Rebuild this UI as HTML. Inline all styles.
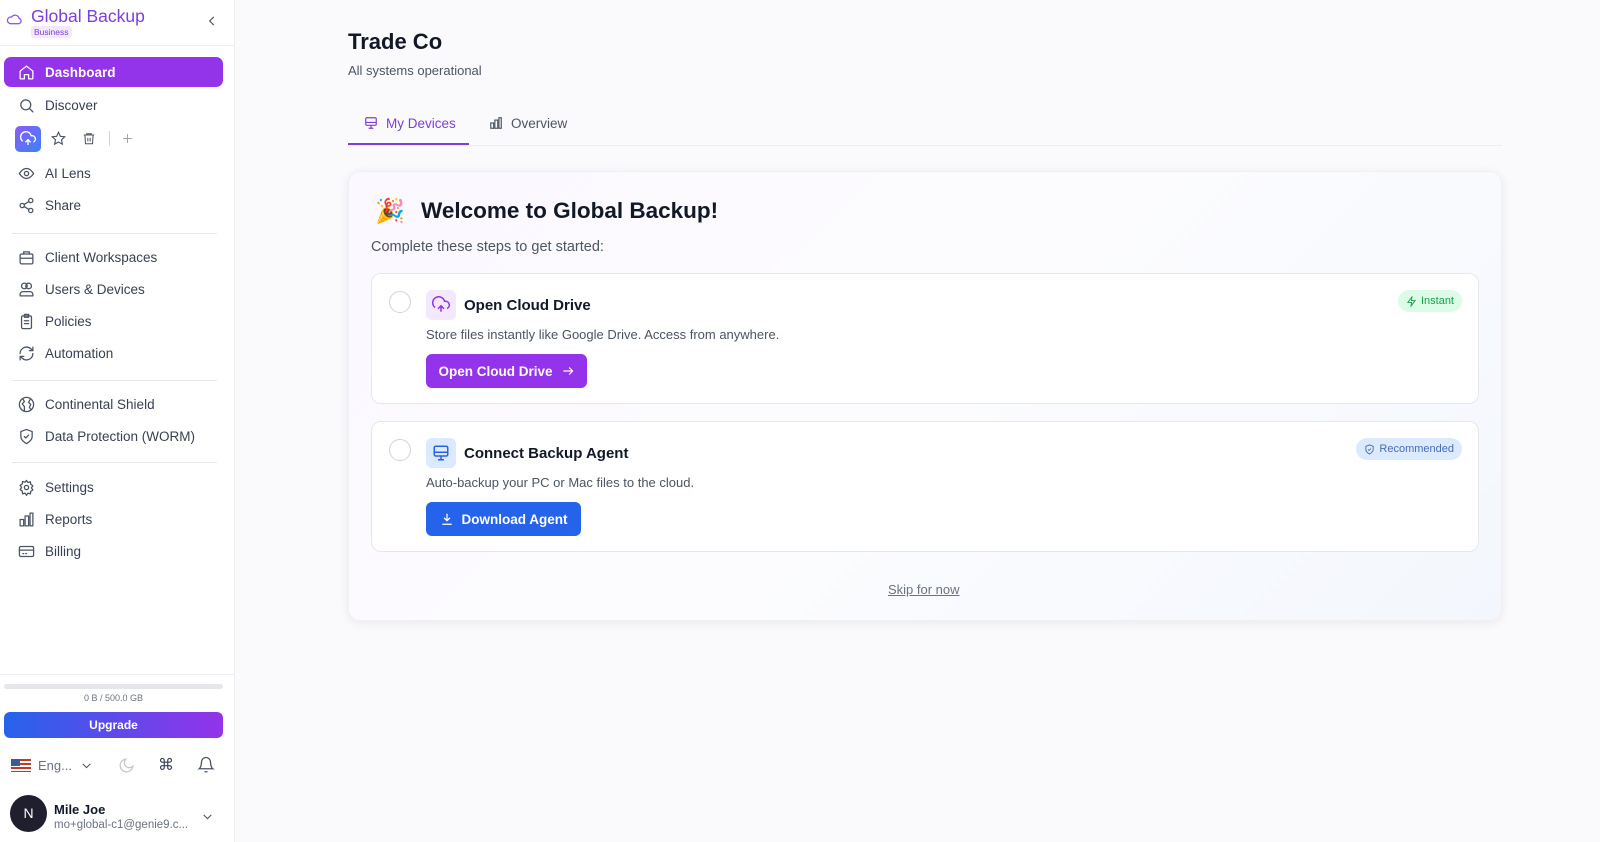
<!DOCTYPE html>
<html><head><meta charset="utf-8"><style>
*{box-sizing:border-box;margin:0;padding:0}
body{width:1600px;height:842px;overflow:hidden;font-family:"Liberation Sans",sans-serif;background:#fafafc;color:#1f2937;position:relative}
.sb{position:absolute;left:0;top:0;width:235px;height:842px;background:#fff;border-right:1px solid #eceef2}
.abs{position:absolute}
.nav{position:absolute;left:18px;display:flex;align-items:center;font-size:13.5px;color:#374151}
.nav svg{width:17px;height:17px;margin-right:10px;stroke:#4b5563;fill:none;stroke-width:1.8;stroke-linecap:round;stroke-linejoin:round}
.div{position:absolute;left:12px;width:205px;height:1px;background:#e5e7eb}
.card{position:absolute;left:348px;top:171px;width:1154px;height:450px;border-radius:12px;background:linear-gradient(135deg,#fbf8ff,#fcfcfe 50%,#f3f7fd);box-shadow:0 2px 10px rgba(0,0,0,.07);border:1px solid #f0f0f4}
.step{position:absolute;left:371px;width:1108px;height:131px;background:#fff;border:1.5px solid #e6e7eb;border-radius:10px}
.circ{position:absolute;left:17px;top:17px;width:22px;height:22px;border:1.5px solid #cfd3d9;border-radius:50%}
.ib{position:absolute;left:54px;top:16px;width:30px;height:30px;border-radius:6px;display:flex;align-items:center;justify-content:center}
.st{position:absolute;left:92px;top:23px;font-size:15px;font-weight:600;color:#111827}
.sd{position:absolute;left:54px;top:53px;font-size:13px;color:#4b5563}
.btn{position:absolute;left:54px;height:34px;border-radius:6px;color:#fff;font-size:13.5px;font-weight:bold;display:flex;align-items:center;justify-content:center;gap:8px}
.badge{position:absolute;top:16px;right:16px;height:22px;border-radius:11px;font-size:11px;display:flex;align-items:center;gap:4px;padding:0 8px}
.chev{position:absolute}
</style></head><body>
<div class="sb">
 <svg class="abs" style="left:5px;top:11px" width="18" height="16" viewBox="0 0 24 24" fill="none" stroke="#8b5cf6" stroke-width="2"><path d="M17.5 19H7a5 5 0 1 1 1.5-9.8A6 6 0 0 1 19.5 11a4 4 0 0 1-2 8z"/></svg>
 <div class="abs" style="left:31px;top:6px;font-size:17.5px;color:#7e3fd8;font-weight:500">Global Backup</div>
 <div class="abs" style="left:31px;top:26px;font-size:8.5px;color:#7e3fd8;background:#f3e8ff;padding:1px 3px;border-radius:3px">Business</div>
 <svg class="abs" style="left:205px;top:14px" width="14" height="14" viewBox="0 0 24 24" fill="none" stroke="#4b5563" stroke-width="2"><path d="M15 5l-7 7 7 7"/></svg>
 <div class="abs" style="left:0;top:45px;width:235px;height:1px;background:#eceef2"></div>
 <div class="abs" style="left:4px;top:57px;width:219px;height:30px;background:#9333ea;border-radius:7px"></div>
 <div class="nav" style="top:64px;color:#fff;font-weight:bold"><svg style="stroke:#fff" viewBox="0 0 24 24"><path d="M3 10l9-7 9 7v10a1 1 0 0 1-1 1h-5v-6h-6v6H4a1 1 0 0 1-1-1z"/></svg>Dashboard</div>
 <div class="nav" style="top:97px"><svg viewBox="0 0 24 24"><circle cx="11" cy="11" r="7"/><path d="M21 21l-5-5"/></svg>Discover</div>
 <div class="abs" style="left:15px;top:126px;width:26px;height:26px;border-radius:5px;background:linear-gradient(135deg,#8b5cf6,#3b82f6);display:flex;align-items:center;justify-content:center"><svg width="16" height="16" viewBox="0 0 24 24" fill="none" stroke="#fff" stroke-width="2"><path d="M12 13v8M8 17l4-4 4 4M20 16.6A5 5 0 0 0 18 7h-1.3A8 8 0 1 0 4 15.3"/></svg></div>
 <svg class="abs" style="left:51px;top:131px" width="15" height="15" viewBox="0 0 24 24" fill="none" stroke="#4b5563" stroke-width="1.8"><path d="M12 2l3 6.5 7 .8-5.2 4.8 1.4 7L12 17.6 5.8 21l1.4-7L2 9.3l7-.8z"/></svg>
 <svg class="abs" style="left:82px;top:131px" width="14" height="15" viewBox="0 0 24 24" fill="none" stroke="#4b5563" stroke-width="1.8"><path d="M3 6h18M8 6V4h8v2M5 6l1 15h12l1-15M10 11v6M14 11v6"/></svg>
 <div class="abs" style="left:109px;top:131px;width:1px;height:15px;background:#d1d5db"></div>
 <svg class="abs" style="left:121px;top:132px" width="13" height="13" viewBox="0 0 24 24" fill="none" stroke="#9ca3af" stroke-width="1.8"><path d="M12 4v16M4 12h16"/></svg>
 <div class="nav" style="top:165px"><svg viewBox="0 0 24 24"><path d="M2 12s4-7 10-7 10 7 10 7-4 7-10 7S2 12 2 12z"/><circle cx="12" cy="12" r="3"/></svg>AI Lens</div>
 <div class="nav" style="top:197px"><svg viewBox="0 0 24 24"><circle cx="18" cy="5" r="3"/><circle cx="6" cy="12" r="3"/><circle cx="18" cy="19" r="3"/><path d="M8.6 13.5l6.8 4M15.4 6.5l-6.8 4"/></svg>Share</div>
 <div class="div" style="top:233px"></div>
 <div class="nav" style="top:249px"><svg viewBox="0 0 24 24"><rect x="3" y="7" width="18" height="14" rx="2"/><path d="M8 7V4h8v3M3 13h18"/></svg>Client Workspaces</div>
 <div class="nav" style="top:281px"><svg viewBox="0 0 24 24"><circle cx="9" cy="7" r="4"/><circle cx="15" cy="7" r="4"/><path d="M3 21v-2a4 4 0 0 1 4-4h10a4 4 0 0 1 4 4v2z"/></svg>Users &amp; Devices</div>
 <div class="nav" style="top:313px"><svg viewBox="0 0 24 24"><rect x="5" y="4" width="14" height="18" rx="2"/><path d="M9 2h6v4H9zM9 11h6M9 15h6"/></svg>Policies</div>
 <div class="nav" style="top:345px"><svg viewBox="0 0 24 24"><path d="M3 12a9 9 0 0 1 15-6.7L21 8M21 3v5h-5M21 12a9 9 0 0 1-15 6.7L3 16M3 21v-5h5"/></svg>Automation</div>
 <div class="div" style="top:380px"></div>
 <div class="nav" style="top:396px"><svg viewBox="0 0 24 24"><circle cx="12" cy="12" r="10"/><path d="M7 4l2 4-3 3 3 4v5M17 5l-2 4 3 3-2 4 2 3"/></svg>Continental Shield</div>
 <div class="nav" style="top:428px"><svg viewBox="0 0 24 24"><path d="M12 22s8-4 8-10V5l-8-3-8 3v7c0 6 8 10 8 10z"/><path d="M9 12l2 2 4-4"/></svg>Data Protection (WORM)</div>
 <div class="div" style="top:462px"></div>
 <div class="nav" style="top:479px"><svg viewBox="0 0 24 24"><circle cx="12" cy="12" r="3"/><path d="M12 2l2 3 3.5-1 .5 3.5 3 2-2 3 2 3-3 2-.5 3.5-3.5-1-2 3-2-3-3.5 1L6 17l-3-2 2-3-2-3 3-2 .5-3.5 3.5 1z"/></svg>Settings</div>
 <div class="nav" style="top:511px"><svg viewBox="0 0 24 24"><rect x="3" y="12" width="5" height="9"/><rect x="10" y="7" width="5" height="14"/><rect x="17" y="3" width="4" height="18"/></svg>Reports</div>
 <div class="nav" style="top:543px"><svg viewBox="0 0 24 24"><rect x="2" y="5" width="20" height="14" rx="2"/><path d="M2 10h20M7 15h1M11 15h1"/></svg>Billing</div>
 <div class="abs" style="left:0;top:674px;width:235px;height:1px;background:#eceef2"></div>
 <div class="abs" style="left:4px;top:684px;width:219px;height:5px;border-radius:3px;background:#e5e7eb"></div>
 <div class="abs" style="left:0;top:693px;width:227px;text-align:center;font-size:9px;color:#6b7280">0 B / 500.0 GB</div>
 <div class="abs" style="left:4px;top:712px;width:219px;height:26px;border-radius:6px;background:linear-gradient(90deg,#2563eb,#9333ea);color:#fff;font-size:12px;font-weight:bold;text-align:center;line-height:26px">Upgrade</div>
 <div class="abs" style="left:11px;top:759px;width:20px;height:13px;background:repeating-linear-gradient(#c0392b 0 2px,#fff 2px 4px)"><div style="width:9px;height:7px;background:#3c5a9a"></div></div>
 <div class="abs" style="left:38px;top:758px;font-size:13px;color:#6b7280">Eng...</div>
 <svg class="abs" style="left:80px;top:759px" width="13" height="13" viewBox="0 0 24 24" fill="none" stroke="#4b5563" stroke-width="2"><path d="M5 9l7 7 7-7"/></svg>
 <svg class="abs" style="left:118px;top:757px" width="17" height="17" viewBox="0 0 24 24" fill="none" stroke="#c4c8ce" stroke-width="1.8"><path d="M21 13A9 9 0 1 1 11 3a7 7 0 0 0 10 10z"/></svg>
 <div class="abs" style="left:158px;top:755px;font-size:16px;color:#374151">⌘</div>
 <svg class="abs" style="left:197px;top:756px" width="18" height="18" viewBox="0 0 24 24" fill="none" stroke="#4b5563" stroke-width="1.8"><path d="M6 8a6 6 0 0 1 12 0c0 7 3 9 3 9H3s3-2 3-9M10 21h4"/></svg>
 <div class="abs" style="left:10px;top:795px;width:37px;height:37px;border-radius:50%;background:#1f1f2e;color:#fff;font-size:14px;text-align:center;line-height:37px">N</div>
 <div class="abs" style="left:54px;top:802px;font-size:13px;font-weight:bold;color:#111827">Mile Joe</div>
 <div class="abs" style="left:54px;top:819px;font-size:11.5px;color:#6b7280">mo+global-c1@genie9.c...</div>
 <svg class="abs" style="left:201px;top:810px" width="13" height="13" viewBox="0 0 24 24" fill="none" stroke="#4b5563" stroke-width="2"><path d="M5 9l7 7 7-7"/></svg>
</div>

<div class="abs" style="left:348px;top:29px;font-size:22px;font-weight:bold;color:#111827">Trade Co</div>
<div class="abs" style="left:348px;top:63px;font-size:13px;color:#4b5563">All systems operational</div>
<div class="abs" style="left:348px;top:145px;width:1154px;height:1px;background:#eceef0"></div>
<div class="abs" style="left:348px;top:143px;width:121px;height:2px;background:#7e3fd8"></div>
<svg class="abs" style="left:364px;top:116px" width="14" height="14" viewBox="0 0 24 24" fill="none" stroke="#7e3fd8" stroke-width="2"><rect x="3" y="3" width="18" height="13" rx="2"/><path d="M3 11h18M8 21h8M12 16v5"/></svg>
<div class="abs" style="left:386px;top:116px;font-size:13.5px;color:#7e3fd8">My Devices</div>
<svg class="abs" style="left:489px;top:116px" width="14" height="14" viewBox="0 0 24 24" fill="none" stroke="#4b5563" stroke-width="2"><rect x="3" y="12" width="5" height="9"/><rect x="10" y="7" width="5" height="14"/><rect x="17" y="3" width="4" height="18"/></svg>
<div class="abs" style="left:511px;top:116px;font-size:13.5px;color:#4b5563">Overview</div>

<div class="card"></div>
<div class="abs" style="left:375px;top:197px;font-size:24px">🎉</div>
<div class="abs" style="left:421px;top:198px;font-size:22.5px;font-weight:bold;color:#111827">Welcome to Global Backup!</div>
<div class="abs" style="left:371px;top:239px;font-size:14.5px;color:#4b5563">Complete these steps to get started:</div>

<div class="step" style="top:273px">
 <div class="circ"></div>
 <div class="ib" style="background:#f3e8ff"><svg width="18" height="18" viewBox="0 0 24 24" fill="none" stroke="#9333ea" stroke-width="2"><path d="M12 13v8M8 17l4-4 4 4M20 16.6A5 5 0 0 0 18 7h-1.3A8 8 0 1 0 4 15.3"/></svg></div>
 <div class="st">Open Cloud Drive</div>
 <div class="sd">Store files instantly like Google Drive. Access from anywhere.</div>
 <div class="btn" style="top:80px;width:161px;background:#9333ea">Open Cloud Drive <svg width="14" height="14" viewBox="0 0 24 24" fill="none" stroke="#fff" stroke-width="2"><path d="M4 12h16M14 6l6 6-6 6"/></svg></div>
 <div class="badge" style="background:#dcfce7;color:#16a34a"><svg width="11" height="11" viewBox="0 0 24 24" fill="none" stroke="#16a34a" stroke-width="2"><path d="M13 2L4 14h8l-1 8 9-12h-8z"/></svg>Instant</div>
</div>
<div class="step" style="top:421px">
 <div class="circ"></div>
 <div class="ib" style="background:#dbeafe"><svg width="18" height="18" viewBox="0 0 24 24" fill="none" stroke="#2563eb" stroke-width="2"><rect x="3" y="3" width="18" height="13" rx="2"/><path d="M3 11h18M8 21h8M12 16v5"/></svg></div>
 <div class="st">Connect Backup Agent</div>
 <div class="sd">Auto-backup your PC or Mac files to the cloud.</div>
 <div class="btn" style="top:80px;width:155px;background:#2563eb"><svg width="14" height="14" viewBox="0 0 24 24" fill="none" stroke="#fff" stroke-width="2.2"><path d="M12 3v12M7 10l5 5 5-5M4 21h16"/></svg>Download Agent</div>
 <div class="badge" style="background:#dbeafe;color:#4b6cb7"><svg width="11" height="11" viewBox="0 0 24 24" fill="none" stroke="#4b6cb7" stroke-width="2"><path d="M12 22s8-4 8-10V5l-8-3-8 3v7c0 6 8 10 8 10z"/><path d="M9 12l2 2 4-4"/></svg>Recommended</div>
</div>
<div class="abs" style="left:888px;top:582px;font-size:13px;color:#6b7280;text-decoration:underline">Skip for now</div>
</body></html>
